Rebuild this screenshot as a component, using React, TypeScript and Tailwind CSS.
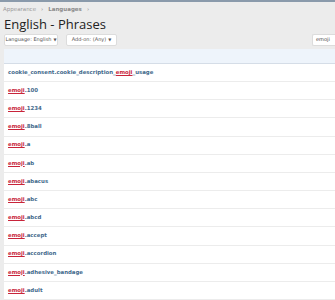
import React from "react";

const rows = [
  ["cookie_consent.cookie_description_", "emoji", "_usage"],
  ["", "emoji", ".100"],
  ["", "emoji", ".1234"],
  ["", "emoji", ".8ball"],
  ["", "emoji", ".a"],
  ["", "emoji", ".ab"],
  ["", "emoji", ".abacus"],
  ["", "emoji", ".abc"],
  ["", "emoji", ".abcd"],
  ["", "emoji", ".accept"],
  ["", "emoji", ".accordion"],
  ["", "emoji", ".adhesive_bandage"],
  ["", "emoji", ".adult"],
];

export default function App() {
  return (
    <div
      className="w-[335px] h-[300px] overflow-hidden bg-[#ececec] flex flex-col"
      style={{ fontFamily: '"DejaVu Sans", "Open Sans", sans-serif' }}
    >
      <div className="h-[2px] bg-[#8a9aab] shrink-0" />
      <div className="pl-[3px] pt-[5px] h-[11px] flex items-center gap-[5px] text-[5.5px] text-[#9a9a9a] leading-none whitespace-nowrap">
        <span>Appearance</span>
        <span>›</span>
        <span className="font-bold text-[#8a8a8a]">Languages</span>
        <span>›</span>
      </div>
      <div
        className="pl-[4px] mt-[5px] h-[16px] flex items-center text-[13px] text-[#222] leading-none whitespace-nowrap"
        style={{ fontFamily: '"Open Sans", sans-serif' }}
      >
        English - Phrases
      </div>
      <div className="mt-[2px] pl-[4px] flex items-center h-[13px] gap-[8px]">
        <div className="h-[12px] w-[54px] shrink-0 bg-white border border-[#dcdcdc] rounded-[2px] flex items-center justify-center text-[5px] text-[#555] leading-none gap-[2px] whitespace-nowrap">
          <span>Language: English</span>
          <span className="text-[4px]">▼</span>
        </div>
        <div className="h-[12px] w-[51px] shrink-0 bg-white border border-[#dcdcdc] rounded-[2px] flex items-center justify-center text-[5px] text-[#555] leading-none gap-[2px] whitespace-nowrap">
          <span>Add-on: (Any)</span>
          <span className="text-[4px]">▼</span>
        </div>
        <div className="flex-1" />
        <div className="h-[12px] w-[23px] shrink-0 bg-white border-l border-y border-[#dcdcdc] rounded-l-[2px] flex items-center pl-[3px] text-[5px] text-[#444] leading-none whitespace-nowrap">
          emoji
        </div>
      </div>
      <div className="ml-[4px] mt-[3px] flex-1 bg-white flex flex-col">
        <div className="h-[15px] bg-[#eef4fb] border-b border-[#d5dde7] shrink-0" />
        {rows.map((r, i) => (
          <div
            key={i}
            className="h-[18.17px] shrink-0 border-b border-[#ececec] flex items-center pl-[4px] text-[5.4px] font-bold text-[#43698c] leading-none whitespace-nowrap"
          >
            <span>{r[0]}</span>
            <span className="text-[#c8243a] underline decoration-[#c8243a] decoration-[0.6px]">{r[1]}</span>
            <span>{r[2]}</span>
          </div>
        ))}
      </div>
    </div>
  );
}
